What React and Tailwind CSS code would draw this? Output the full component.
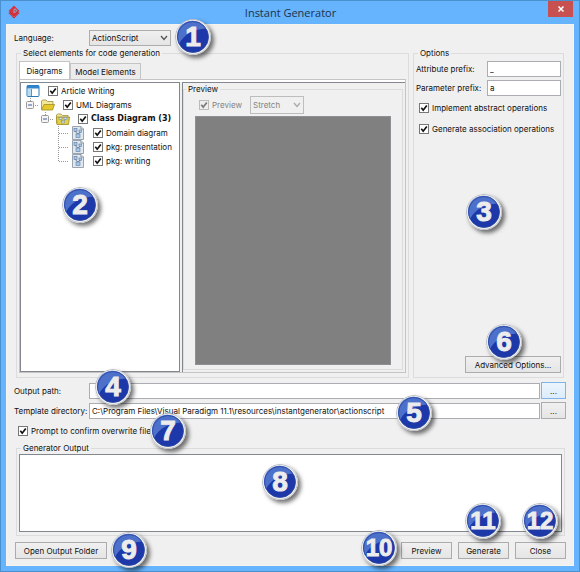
import React, { useState } from 'react';
import clsx from 'clsx';

const tree = [
    { label: 'Article Writing', level: 0, kind: 'project' },
    { label: 'UML Diagrams', level: 1, kind: 'folder' },
    { label: 'Class Diagram (3)', level: 2, kind: 'classFolder', bold: true },
    { label: 'Domain diagram', level: 3, kind: 'diagram' },
    { label: 'pkg: presentation', level: 3, kind: 'diagram' },
    { label: 'pkg: writing', level: 3, kind: 'diagram', last: true },
];

const indents = ['pl-[5px]', 'pl-[5px]', 'pl-[20px]', 'pl-[35px]'];

// Numbered callout, placed over the control that it describes
const Badge = ({ n, className }) => (
    <span className={clsx('pointer-events-none absolute z-10 grid size-9 place-items-center', className)}>
        <svg viewBox="0 0 36 36" className="col-start-1 row-start-1 size-9 rounded-full shadow-[3px_3px_4px_rgba(0,0,0,0.55)]">
            <circle cx="18" cy="18" r="17.5" fill="#f2f2f2" stroke="#b9bcc4" strokeWidth="1" />
            <circle cx="18" cy="18" r="15.5" fill="#1d38a8" />
            <path d="M4 25A15.5 15.5 0 0 1 31 9.500C20 10 9 15 4 25Z" fill="#4d70cb" />
            <circle cx="18" cy="18" r="15.500" fill="none" stroke="#2a469f" strokeWidth="0.800" />
        </svg>
        <span
            className={clsx(
                "relative col-start-1 row-start-1 font-['Liberation_Sans',sans-serif] leading-none font-bold text-[#ececec] [-webkit-text-stroke:1px_#ececec]",
                n > 9 ? 'text-[24px]' : 'text-[28px]'
            )}
        >
            {n}
        </span>
    </span>
);

const CheckBox = ({ label, bold, disabled, className }) => {
    const [checked, setChecked] = useState(true);

    return (
        <label className={clsx('flex items-center gap-[3px] whitespace-nowrap', disabled && 'text-[#838383]', className)}>
            <span className="grid size-[10px] shrink-0">
                <input
                    type="checkbox"
                    checked={checked}
                    disabled={disabled}
                    onChange={(e) => setChecked(e.target.checked)}
                    className="col-start-1 row-start-1 size-[10px] appearance-none border border-[#777] bg-white disabled:border-[#bbb] disabled:bg-[#eee]"
                />
                {checked && (
                    <svg viewBox="0 0 10 10" className="pointer-events-none col-start-1 row-start-1 size-[10px]">
                        <path d="M2.300 4.800L4.200 7.200L7.800 2.500" fill="none" stroke={disabled ? '#777' : '#111'} strokeWidth="1.700" />
                    </svg>
                )}
            </span>
            <span className={clsx(bold && "font-['DejaVu_Sans',sans-serif] font-bold")}>{label}</span>
        </label>
    );
};

const DropDown = ({ id, value, disabled, className, ...rest }) => (
    <span className={clsx('grid items-center', className)}>
        <select
            id={id}
            disabled={disabled}
            defaultValue={value}
            className="col-start-1 row-start-1 h-4 w-full appearance-none border border-[#adadad] bg-gradient-to-b from-[#f0f0f0] to-[#e5e5e5] pl-[2px] text-[8px] leading-none disabled:h-[18px] disabled:border-[#bdbdbd] disabled:bg-none disabled:text-[#838383] disabled:opacity-100"
            {...rest}
        >
            <option>{value}</option>
        </select>
        <svg viewBox="0 0 8 6" className="pointer-events-none col-start-1 row-start-1 mr-[3px] h-[6px] w-2 justify-self-end">
            <path d="M1 1L4 4.500L7 1" fill="none" stroke={disabled ? '#aaa' : '#555'} strokeWidth="1.300" />
        </svg>
    </span>
);

const Button = ({ children, active, className, ...rest }) => (
    <button
        type="button"
        className={clsx(
            'border text-center leading-none',
            active ? 'border-[#7eb4ea] bg-gradient-to-b from-[#ecf4fc] to-[#dcecfc]' : 'border-[#acacac] bg-gradient-to-b from-[#f0f0f0] to-[#e5e5e5]',
            className
        )}
        {...rest}
    >
        {children}
    </button>
);

const TreeIcon = ({ kind }) => {
    if (kind === 'project') {
        return (
            <svg viewBox="0 0 14 12" className="h-3 w-[14px]">
                <rect x="1" y="0.500" width="12" height="11" rx="1" fill="#fff" stroke="#2d78b8" />
                <rect x="1" y="0.500" width="12" height="3" fill="#2f86cf" />
                <rect x="2" y="4" width="3" height="7" fill="#b9dcf5" />
                <path d="M5.500 4V11" stroke="#2d78b8" strokeWidth="0.800" />
            </svg>
        );
    }
    if (kind === 'diagram') {
        return (
            <svg viewBox="0 0 14 14" className="size-[14px]">
                <path d="M1.500 0.500H10L12.500 3V13.500H1.500Z" fill="#dfe7ef" stroke="#9aa3ae" />
                <path d="M10 0.500V3H12.500" fill="#fff" stroke="#6f7a88" strokeWidth="0.800" />
                <path d="M4.500 4V6L7 8V10M9.500 5L7.500 8" fill="none" stroke="#5c718d" strokeWidth="0.900" />
                <rect x="3" y="2.500" width="3" height="3" fill="#a9c8e8" stroke="#5d789c" strokeWidth="0.600" />
                <rect x="8" y="4" width="2.500" height="2.500" fill="#a9c8e8" stroke="#5d789c" strokeWidth="0.600" />
                <rect x="5" y="8" width="4" height="3.500" fill="#a9c8e8" stroke="#5d789c" strokeWidth="0.600" />
            </svg>
        );
    }
    return (
        <svg viewBox="0 0 14 12" className="h-3 w-[14px]">
            <path d="M0.500 10.500V2L1.500 1H5L6.500 2.500H12V5" fill="#f3e79a" stroke="#a89a50" strokeWidth="0.900" />
            {kind === 'folder' ? (
                <path d="M0.500 11L3 5.500H13.500L11.500 11Z" fill="#e3c92c" stroke="#a8942c" strokeWidth="0.900" />
            ) : (
                <>
                    <path d="M0.500 4H13.500L12.500 11.500H1Z" fill="#e3cf45" stroke="#a8942c" strokeWidth="0.900" />
                    <path d="M4.500 6L7 9M9.500 6L7 9" stroke="#6b86a8" strokeWidth="0.800" />
                    <rect x="3" y="4.500" width="3" height="2" fill="#cfe0f2" stroke="#6b86a8" strokeWidth="0.500" />
                    <rect x="8" y="4.500" width="3" height="2" fill="#cfe0f2" stroke="#6b86a8" strokeWidth="0.500" />
                    <rect x="5.500" y="8" width="3" height="2" fill="#cfe0f2" stroke="#6b86a8" strokeWidth="0.500" />
                </>
            )}
        </svg>
    );
};

const TreeLines = ({ level, last }) => (
    <svg viewBox="0 0 15 14" className="h-[14px] w-[15px]" fill="none" stroke="#999" strokeDasharray="1 1">
        {level < 3 ? (
            <>
                <path d="M4.500 0V3M9 7.500H13" />
                <rect x="0.500" y="3.500" width="7" height="7" rx="1" fill="#f4f4f4" strokeDasharray="none" />
                <path d="M2 7H6" stroke="#445c9c" strokeDasharray="none" />
            </>
        ) : (
            <path d={last ? 'M2.500 0V7.500H12' : 'M2.500 0V14M3 7.500H12'} />
        )}
    </svg>
);

const Group = ({ title, className, children }) => (
    <fieldset className={clsx('relative min-w-0 border border-[#dcdcdc]', className)}>
        <legend className="ml-[2px] px-[2px] leading-3">{title}</legend>
        {children}
    </fieldset>
);

const inputStyle = 'min-w-0 border border-[#abadb3] bg-white px-[2px] leading-none outline-none';

const App = () => {
    const [tab, setTab] = useState('Diagrams');

    return (
        <div className="flex min-h-screen flex-col border border-[#4a90cf] bg-[#66b3fe] px-[5px] pb-[5px] font-[Inter,'Open_Sans',sans-serif] text-[8px] leading-3 text-[#111]">
            <header className="flex h-[23px] items-start">
                <svg viewBox="0 0 12 14" className="mt-1 ml-[2px] h-[14px] w-3">
                    <path d="M6 0.500L11.500 6L6 11L0.500 6Z" fill="#d8343c" />
                    <path d="M0.500 8L6 13.500L11.500 8L9.500 7L6 10.500L2.500 7Z" fill="#c3262e" />
                    <path d="M6 8V4.500A1.500 1.500 0 1 1 6.500 7" fill="none" stroke="#8fb8e8" strokeWidth="0.900" />
                    <path d="M2 8.500L6 12L10 8.500" fill="none" stroke="#e58a90" strokeWidth="0.500" />
                </svg>
                <h1 className="flex-1 pl-[13px] text-center font-['Open_Sans',sans-serif] text-[11px] leading-6 text-[#1c3348]">Instant Generator</h1>
                <button type="button" aria-label="Close window" className="mr-[1px] grid h-4 w-[25px] place-items-center bg-[#c75050]">
                    <svg viewBox="0 0 8 8" className="size-2">
                        <path d="M1.500 1.500L6.500 6.500M6.500 1.500L1.500 6.500" stroke="#fff" strokeWidth="1.500" />
                    </svg>
                </button>
            </header>

            <main className="flex flex-1 flex-col border border-[#f7f3ee] bg-[#f0f0f0] px-[7px] pt-[5px] pb-[6px]">
                <div className="relative flex items-center">
                    <label htmlFor="language" className="w-[75px]">Language:</label>
                    <DropDown id="language" value="ActionScript" className="w-[82px]" />
                    <Badge n={1} className="-top-[11px] left-[161px]" />
                </div>

                <div className="mt-px flex flex-1 gap-1 pr-[2px] pl-[2px]">
                    <Group title="Select elements for code generation" className="flex flex-1 flex-col px-[2px] pb-1">
                        <div role="tablist" className="flex items-end pt-[2px]">
                            {['Diagrams', 'Model Elements'].map((name) => (
                                <button
                                    key={name}
                                    type="button"
                                    role="tab"
                                    aria-selected={tab === name}
                                    onClick={() => setTab(name)}
                                    className={clsx(
                                        'border border-b-0 border-[#c4c4c4]',
                                        tab === name ? 'h-[18px] w-[51px] bg-white' : 'h-4 w-[71px] bg-[#ececec]'
                                    )}
                                >
                                    {name}
                                </button>
                            ))}
                        </div>
                        <div className="flex flex-1 border border-[#c4c4c4] bg-[#f0f0f0] pt-[2px] shadow-[inset_0_2px_0_#fff]">
                            <div className="relative w-40 border border-[#828790] bg-white pt-px">
                                <ul>
                                    {tree.map((node) => (
                                        <li key={node.label} className={clsx('flex h-[14px] items-center', indents[node.level])}>
                                            {node.level > 0 && <TreeLines level={node.level} last={node.last} />}
                                            <TreeIcon kind={node.kind} />
                                            <CheckBox label={node.label} bold={node.bold} className="pl-2" />
                                        </li>
                                    ))}
                                </ul>
                                <Badge n={2} className="top-[104px] left-[41px]" />
                            </div>
                            <div className="ml-[2px] flex flex-1 border-t border-l border-[#828790] pr-[2px] pb-[2px]">
                                <Group title="Preview" className="flex flex-1 flex-col pb-1">
                                    <div className="flex items-center gap-2 pt-px pb-[2px] pl-[15px]">
                                        <CheckBox label="Preview" disabled />
                                        <DropDown value="Stretch" disabled className="w-[54px]" aria-label="Preview size" />
                                    </div>
                                    <div className="mx-[11px] flex-1 border border-[#8c9096] bg-[#808080]" />
                                </Group>
                            </div>
                        </div>
                    </Group>

                    <Group title="Options" className="flex w-[151px] flex-col px-[2px] pb-1">
                        <div className="grid grid-cols-[71px_1fr] items-center gap-y-[3px] pt-[2px]">
                            <label htmlFor="attribute">Attribute prefix:</label>
                            <input id="attribute" defaultValue="_" className={clsx(inputStyle, 'h-4')} />
                            <label htmlFor="parameter">Parameter prefix:</label>
                            <input id="parameter" defaultValue="a" className={clsx(inputStyle, 'h-4')} />
                        </div>
                        <CheckBox label="Implement abstract operations" className="mt-[6px] pl-[3px]" />
                        <CheckBox label="Generate association operations" className="mt-[9px] pl-[3px]" />
                        <Button className="mt-auto h-[17px] w-24 self-end">Advanced Options...</Button>
                        <Badge n={3} className="top-[135px] left-[52px]" />
                        <Badge n={6} className="right-[41px] bottom-[17px]" />
                    </Group>
                </div>

                <div className="relative mt-1 flex items-center">
                    <label htmlFor="output" className="w-[75px] whitespace-nowrap">Output path:</label>
                    <input id="output" className={clsx(inputStyle, 'h-4 flex-1')} />
                    <Button active className="ml-px h-[17px] w-[25px]">...</Button>
                    <Badge n={4} className="-top-[13px] left-[81px]" />
                </div>
                <div className="relative mt-[3px] flex items-center">
                    <label htmlFor="template" className="w-[75px] whitespace-nowrap">Template directory:</label>
                    <input
                        id="template"
                        defaultValue="C:\Program Files\Visual Paradigm 11.1\resources\instantgenerator\actionscript"
                        className={clsx(inputStyle, 'h-4 flex-1')}
                    />
                    <Button className="ml-px h-[17px] w-[25px]">...</Button>
                    <Badge n={5} className="-top-[7px] right-[134px]" />
                </div>

                <div className="relative mt-[6px]">
                    <CheckBox label="Prompt to confirm overwrite files" className="pl-1" />
                    <Badge n={7} className="-top-3 left-[136px]" />
                </div>

                <Group title="Generator Output" className="mt-[5px] mr-px ml-[2px] px-[2px] pb-[3px]">
                    <textarea aria-label="Generator Output" className="block h-[78px] w-full resize-none border border-[#828790] bg-white outline-none" />
                    <Badge n={8} className="top-[10px] left-[245px]" />
                </Group>

                <div className="relative mt-[6px] flex items-center gap-[6px]">
                    <Button className="mr-auto ml-px h-[17px] w-[92px]">Open Output Folder</Button>
                    <Button className="h-[17px] w-[51px]">Preview</Button>
                    <Button className="h-[17px] w-[51px]">Generate</Button>
                    <Button className="h-[17px] w-[51px]">Close</Button>
                    <Badge n={9} className="-top-[10px] left-[97px]" />
                    <Badge n={10} className="-top-[12px] right-[169px]" />
                    <Badge n={11} className="-top-[39px] right-[65px]" />
                    <Badge n={12} className="-top-[39px] right-2" />
                </div>
            </main>
        </div>
    );
};

export default App;
